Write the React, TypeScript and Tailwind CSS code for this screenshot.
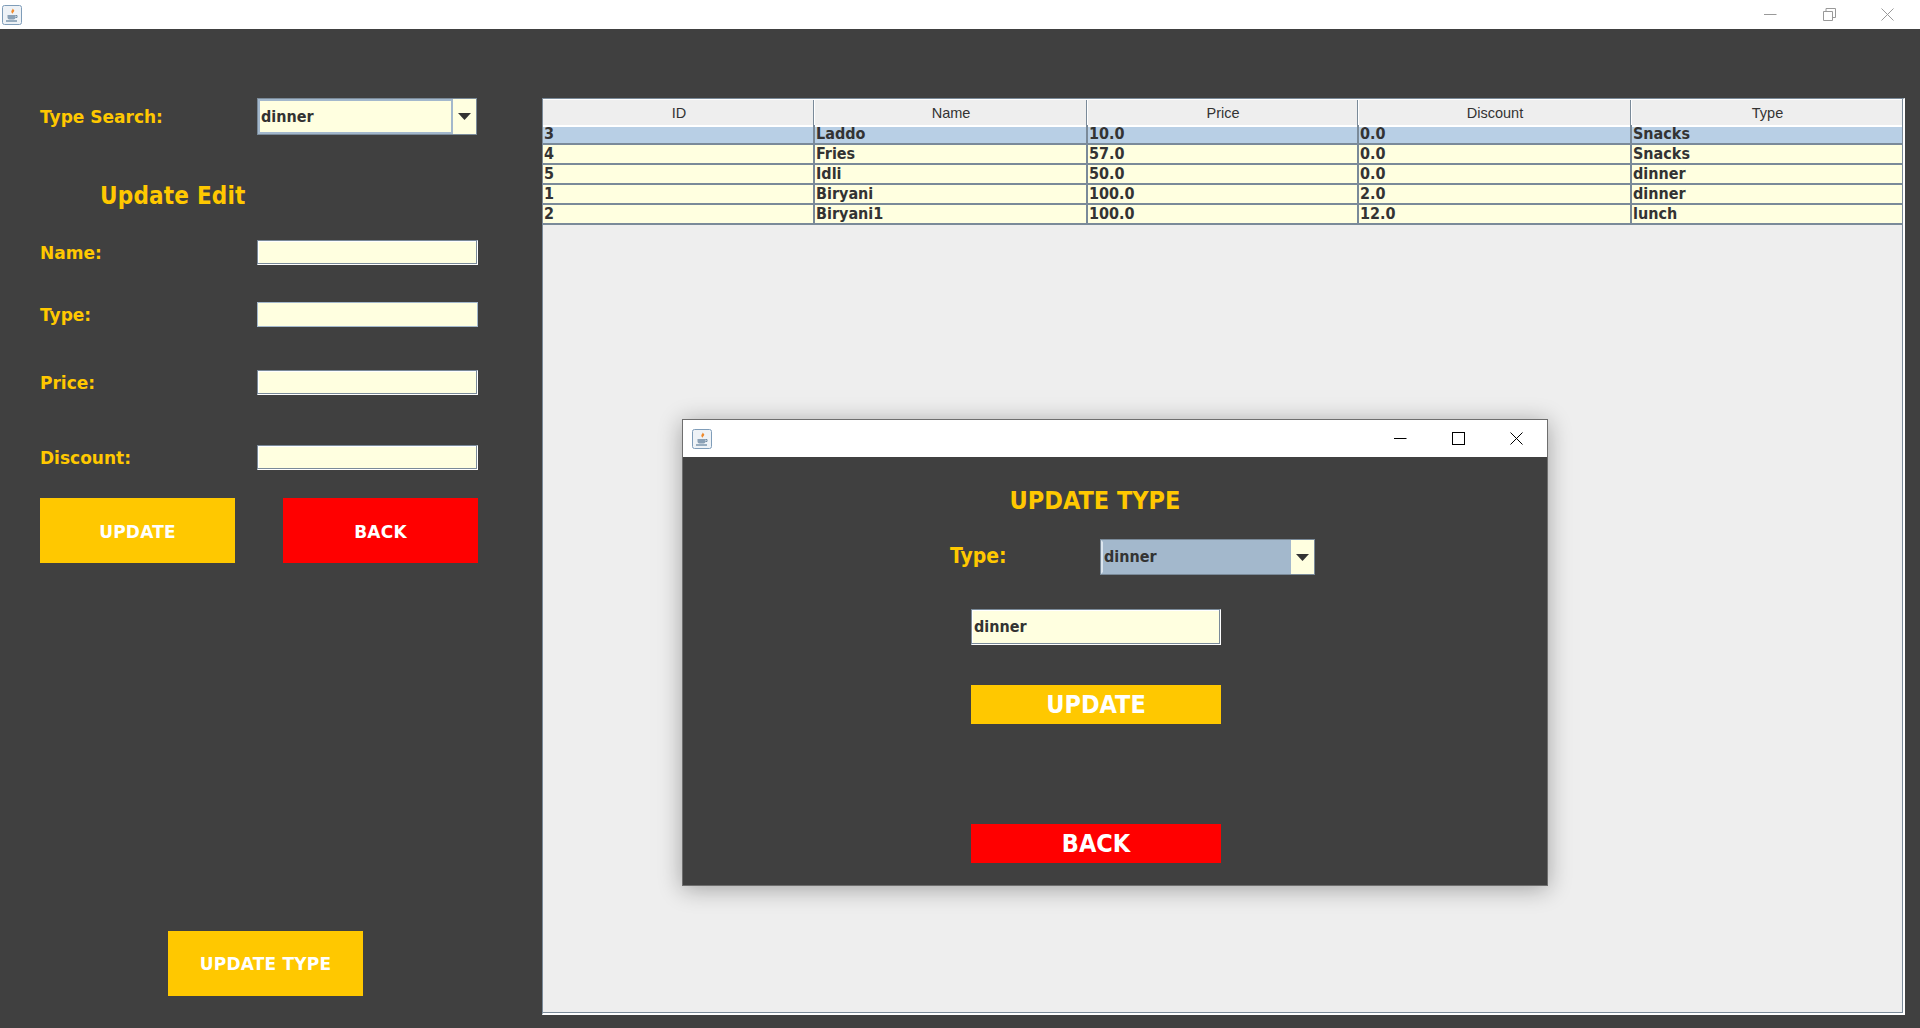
import type { ReactNode } from 'react';

const columns = ['ID', 'Name', 'Price', 'Discount', 'Type'];
const rows = [
  ['3', 'Laddo', '10.0', '0.0', 'Snacks'],
  ['4', 'Fries', '57.0', '0.0', 'Snacks'],
  ['5', 'Idli', '50.0', '0.0', 'dinner'],
  ['1', 'Biryani', '100.0', '2.0', 'dinner'],
  ['2', 'Biryani1', '100.0', '12.0', 'lunch'],
];

function JavaIcon() {
  return (
    <svg width="20" height="20" viewBox="0 0 20 20">
      <rect x="0.5" y="0.5" width="19" height="19" rx="2" fill="#eef2f6" stroke="#7f9db9" />
      <path d="M10.5 3c1 1.5-2 2.5-1 4.5.3.7 1 1 1.5 1.2-.5-1.2 2-2.2 1-3.6-.3-.6-1-.9-1.500-2.100z" fill="#ef8a2c" />
      <path d="M5.500 10h8v2.500c0 1.200-1 2-2 2h-4c-1 0-2-.8-2-2z" fill="#8aa0b5" />
      <path d="M13.500 10.500h1.500v2h-1.500" fill="none" stroke="#6f8aa3" />
      <path d="M4 16h11" stroke="#5f7f9c" strokeWidth="1.200" />
    </svg>
  );
}

function TextInput({ focused, value, className }: { focused?: boolean; value?: string; className: string }) {
  const border = focused
    ? 'border border-[#a3b8cc]'
    : 'border border-t-[#7a8a99] border-l-[#7a8a99] border-r-white border-b-white shadow-[inset_-1px_-1px_0_#7a8a99,inset_1px_1px_0_#ffffff]';
  return (
    <div className={`flex items-center bg-[#ffffe0] pl-[2px] text-[16px] font-bold text-[#333333] ${border} ${className}`}>
      {value}
    </div>
  );
}

function Combo({ className, selected }: { className: string; selected?: boolean }) {
  return (
    <div className={`flex border border-[#7a8a99] bg-[#ffffe0] ${className}`}>
      <div
        className={`flex flex-1 items-center border-2 border-[#a3b8cc] pl-[1px] text-[16px] font-bold text-[#333333] ${
          selected ? 'bg-[#a3b8cc] border-l-[#dbe5ee]' : ''
        }`}
      >
        dinner
      </div>
      <div className="flex w-[23px] items-center justify-center">
        <svg width="13" height="7" viewBox="0 0 13 7">
          <path d="M0 0h13L6.500 7z" fill="#333333" />
        </svg>
      </div>
    </div>
  );
}

function FormRow({ label, className, children }: { label: string; className: string; children: ReactNode }) {
  return (
    <div className={`flex items-center ${className}`}>
      <div className="w-[217px] pt-[3px] text-[17px] font-bold text-[#ffc800] font-['DejaVu_Sans',sans-serif]">
        {label}
      </div>
      {children}
    </div>
  );
}

function FlatButton({ label, className }: { label: string; className: string }) {
  return <div className={`flex items-center justify-center font-bold text-white ${className}`}>{label}</div>;
}

function UpdateTypeDialog() {
  return (
    <div className="absolute left-[682px] top-[419px] h-[467px] w-[866px] border border-[#6e6e6e] bg-[#404040] shadow-[0_3px_22px_rgba(0,0,0,0.32)]">
      <div className="flex h-[37px] items-center bg-white pl-[9px]">
        <JavaIcon />
        <div className="ml-auto flex items-center pr-[24px]">
          <svg width="13" height="13" viewBox="0 0 13 13">
            <path d="M0 6.500h12.500" stroke="#000" />
          </svg>
          <svg className="ml-[45px]" width="13" height="13" viewBox="0 0 13 13">
            <rect x="0.500" y="0.500" width="12" height="12" fill="none" stroke="#000" />
          </svg>
          <svg className="ml-[45px]" width="13" height="13" viewBox="0 0 13 13">
            <path d="M0.500 0.500l12 12M12.500 0.500l-12 12" stroke="#000" />
          </svg>
        </div>
      </div>
      <div className="ml-[288px] flex w-[250px] flex-col">
        <div className="mt-[28px] -ml-[2px] text-center text-[25px] leading-[32px] font-bold text-[#ffc800]">UPDATE TYPE</div>
        <div className="mt-[22px] -ml-[21px] flex w-[365px] items-center">
          <div className="w-[150px] text-[21px] font-bold text-[#ffc800]">Type:</div>
          <Combo className="h-[36px] w-[215px]" selected />
        </div>
        <TextInput value="dinner" className="mt-[34px] h-[36px] w-[250px]" />
        <FlatButton label="UPDATE" className="mt-[40px] h-[39px] bg-[#ffc800] text-[25px]" />
        <FlatButton label="BACK" className="mt-[100px] h-[39px] bg-[#ff0000] text-[25px]" />
      </div>
    </div>
  );
}

export default function App() {
  return (
    <div className="relative flex h-[1028px] w-[1920px] flex-col overflow-hidden bg-[#404040] font-['DejaVu_Sans_Condensed','DejaVu_Sans',sans-serif]">
      <div className="flex h-[29px] shrink-0 items-center bg-white pl-[2px]">
        <JavaIcon />
        <div className="ml-auto flex items-center pr-[26px]">
          <svg width="13" height="13" viewBox="0 0 13 13">
            <path d="M0 6.500h12.500" stroke="#999999" />
          </svg>
          <svg className="ml-[46px]" width="13" height="13" viewBox="0 0 13 13">
            <path d="M0.500 3.500h9v9h-9zM3 3.500v-3h9.500v9h-3" fill="none" stroke="#999999" />
          </svg>
          <svg className="ml-[45px]" width="13" height="13" viewBox="0 0 13 13">
            <path d="M0.500 0.500l12 12M12.500 0.500l-12 12" stroke="#999999" />
          </svg>
        </div>
      </div>

      <div className="flex flex-1">
        <div className="w-[542px] shrink-0 pl-[40px] pt-[69px]">
          <FormRow label="Type Search:" className="h-[37px]">
            <Combo className="h-[37px] w-[220px]" />
          </FormRow>
          <div className="mt-[45px] ml-[60px] text-[24px] leading-[32px] font-bold tracking-[0.2px] text-[#ffc800]">Update Edit</div>
          <FormRow label="Name:" className="mt-[28px] h-[25px]">
            <TextInput className="h-[25px] w-[221px]" />
          </FormRow>
          <FormRow label="Type:" className="mt-[37px] h-[25px]">
            <TextInput focused className="h-[25px] w-[221px]" />
          </FormRow>
          <FormRow label="Price:" className="mt-[43px] h-[25px]">
            <TextInput className="h-[25px] w-[221px]" />
          </FormRow>
          <FormRow label="Discount:" className="mt-[50px] h-[25px]">
            <TextInput className="h-[25px] w-[221px]" />
          </FormRow>
          <div className="mt-[28px] flex w-[438px] justify-between">
            <FlatButton
              label="UPDATE"
              className="h-[65px] w-[195px] bg-[#ffc800] pt-[4px] text-[17px] tracking-[0.2px] font-['DejaVu_Sans',sans-serif]"
            />
            <FlatButton
              label="BACK"
              className="h-[65px] w-[195px] bg-[#ff0000] pt-[4px] text-[17px] tracking-[0.2px] font-['DejaVu_Sans',sans-serif]"
            />
          </div>
          <FlatButton
            label="UPDATE TYPE"
            className="mt-[368px] ml-[128px] h-[65px] w-[195px] bg-[#ffc800] pt-[2px] text-[17px] tracking-[0.2px] font-['DejaVu_Sans',sans-serif]"
          />
        </div>

        <div className="mt-[69px] mb-[13px] w-[1363px] border-t border-l border-t-[#7a8a99] border-l-[#7a8a99] border-r-2 border-b-2 border-r-white border-b-white">
          <div className="h-full border-r border-b border-r-[#7a8a99] border-b-[#7a8a99] bg-[#eeeeee]">
            <div className="grid h-[26px] grid-cols-[270px_273px_271px_273px_1fr] border-t border-t-white bg-[#eeeeee]">
              {columns.map((c, i) => (
                <div
                  key={c}
                  className={`flex items-center justify-center border-b-2 border-b-white pt-[3px] pl-[2px] text-[14.5px] text-[#333333] font-['Liberation_Sans',sans-serif] ${
                    i > 0 ? 'border-l border-l-[#7a8a99] shadow-[inset_1px_0_0_#ffffff]' : ''
                  }`}
                >
                  {c}
                </div>
              ))}
            </div>
            {rows.map((row, r) => (
              <div
                key={row[0]}
                className={`grid h-[20px] grid-cols-[270px_273px_271px_273px_1fr] border-b-2 border-b-[#7a8a99] ${
                  r === 0 ? 'bg-[#b8cfe5]' : 'bg-[#ffffe0]'
                }`}
              >
                {row.map((cell, i) => (
                  <div
                    key={i}
                    className={`pl-[1px] text-[16px] leading-[18px] font-bold text-[#333333] ${
                      i > 0 ? 'border-l-2 border-l-[#7a8a99]' : ''
                    }`}
                  >
                    {cell}
                  </div>
                ))}
              </div>
            ))}
          </div>
        </div>
      </div>

      <UpdateTypeDialog />
    </div>
  );
}
